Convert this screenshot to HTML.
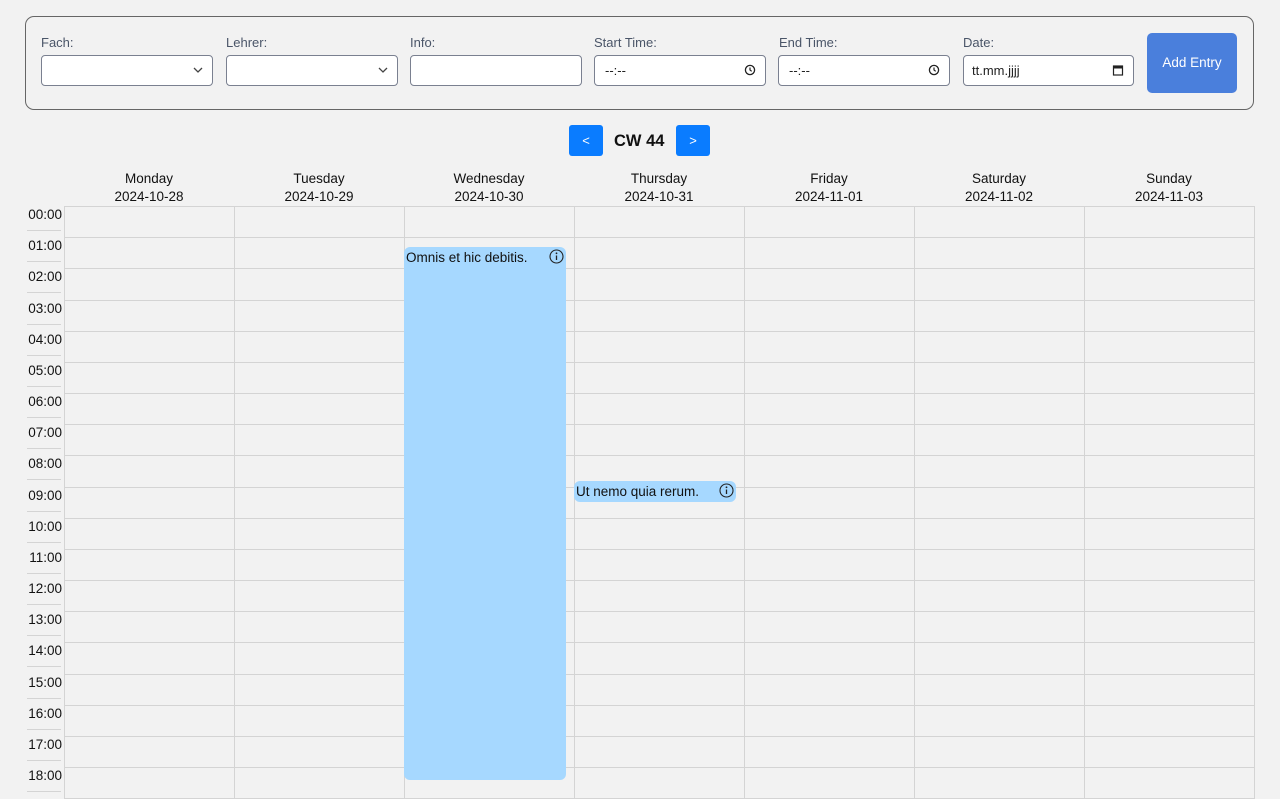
<!DOCTYPE html>
<html><head><style>
*{box-sizing:border-box;margin:0;padding:0}
body{width:1280px;height:799px;overflow:hidden;background:#f2f2f2;font-family:"Liberation Sans",sans-serif;color:#111;position:relative}
.form{position:absolute;left:25px;top:16px;width:1229px;height:94px;border:1px solid #666;border-radius:9px}
.lbl{position:absolute;top:35px;font-size:13px;color:#4a5568}
.inp{position:absolute;top:55px;height:31px;width:172px;background:#fff;border:1px solid #7a8090;border-radius:4px;font-size:13px;padding:0 10px;line-height:29px;color:#222}
.ic{position:absolute;right:9px;top:8px}
.btn{position:absolute;left:1147px;top:33px;width:90px;height:60px;background:#4a7fdc;border-radius:5px;color:#fff;font-size:13.5px;text-align:center;line-height:60px}
.nav{position:absolute;top:125px;width:34px;height:31px;background:#0a7cff;border-radius:3px;color:#fff;font-size:13px;text-align:center;line-height:31px}
.cw{position:absolute;left:614px;top:132px;font-size:16.5px;font-weight:bold}
.dh{position:absolute;top:170px;width:170px;text-align:center;font-size:13.5px;line-height:18px}
.vl{position:absolute;top:206px;bottom:0;width:1px;background:#d4d4d4}
.hl{position:absolute;left:64px;width:1190px;height:1px;background:#d4d4d4}
.tl{position:absolute;left:18px;width:44px;text-align:right;font-size:13.5px}
.ts{position:absolute;left:27px;width:34px;height:1px;background:#d4d4d4}
.ev{position:absolute;background:#a6d8ff;border-radius:6px;font-size:13.5px;padding-left:2px;color:#111}
.info{position:absolute;right:2px;top:2px}
</style></head><body>
<div class="form"></div>
<div class="lbl" style="left:41px">Fach:</div>
<div class="lbl" style="left:226px">Lehrer:</div>
<div class="lbl" style="left:410px">Info:</div>
<div class="lbl" style="left:594px">Start Time:</div>
<div class="lbl" style="left:779px">End Time:</div>
<div class="lbl" style="left:963px">Date:</div>
<div class="inp" style="left:41px"><svg class="ic" style="top:11px" width="10" height="7" viewBox="0 0 10 7"><path d="M1 1l4 4 4-4" stroke="#444" fill="none" stroke-width="1.3"/></svg></div>
<div class="inp" style="left:226px"><svg class="ic" style="top:11px" width="10" height="7" viewBox="0 0 10 7"><path d="M1 1l4 4 4-4" stroke="#444" fill="none" stroke-width="1.3"/></svg></div>
<div class="inp" style="left:410px"></div>
<div class="inp" style="left:594px">--:--<svg class="ic" width="12" height="12" viewBox="0 0 12 12"><circle cx="6" cy="6" r="4.6" stroke="#222" fill="none" stroke-width="1.3"/><path d="M6 3.5V6l1.7 1.3" stroke="#222" fill="none" stroke-width="1.2"/></svg></div>
<div class="inp" style="left:778px">--:--<svg class="ic" width="12" height="12" viewBox="0 0 12 12"><circle cx="6" cy="6" r="4.6" stroke="#222" fill="none" stroke-width="1.3"/><path d="M6 3.5V6l1.7 1.3" stroke="#222" fill="none" stroke-width="1.2"/></svg></div>
<div class="inp" style="left:963px;width:171px;padding-left:8px">tt.mm.jjjj<svg class="ic" width="12" height="12" viewBox="0 0 12 12"><rect x="1.5" y="2" width="9" height="9" stroke="#222" fill="none" stroke-width="1.2"/><rect x="1.5" y="2" width="9" height="2.5" fill="#222"/></svg></div>
<div class="btn">Add Entry</div>
<div class="nav" style="left:569px">&lt;</div>
<div class="cw">CW 44</div>
<div class="nav" style="left:676px">&gt;</div>
<div class="dh" style="left:64px">Monday<br>2024-10-28</div>
<div class="dh" style="left:234px">Tuesday<br>2024-10-29</div>
<div class="dh" style="left:404px">Wednesday<br>2024-10-30</div>
<div class="dh" style="left:574px">Thursday<br>2024-10-31</div>
<div class="dh" style="left:744px">Friday<br>2024-11-01</div>
<div class="dh" style="left:914px">Saturday<br>2024-11-02</div>
<div class="dh" style="left:1084px">Sunday<br>2024-11-03</div>
<div id="g"></div>
<div class="ev" style="left:404px;top:247px;width:162px;height:533px;line-height:22px">Omnis et hic debitis.<svg class="info" width="15" height="15" viewBox="0 0 15 15"><circle cx="7.5" cy="7.5" r="6.5" stroke="#222" fill="none" stroke-width="1.1"/><circle cx="7.5" cy="4.3" r="0.9" fill="#222"/><path d="M7.5 6.5v4.5" stroke="#222" stroke-width="1.3"/></svg></div>
<div class="ev" style="left:574px;top:481px;width:162px;height:21px;line-height:21px">Ut nemo quia rerum.<svg class="info" width="15" height="15" viewBox="0 0 15 15" style="right:2px;top:2px"><circle cx="7.5" cy="7.5" r="6.5" stroke="#222" fill="none" stroke-width="1.1"/><circle cx="7.5" cy="4.3" r="0.9" fill="#222"/><path d="M7.5 6.5v4.5" stroke="#222" stroke-width="1.3"/></svg></div>
<script>
var g=document.getElementById('g'),h='';
[64,234,404,574,744,914,1084,1254].forEach(function(x){h+='<div class="vl" style="left:'+x+'px"></div>'});
for(var i=0;i<20;i++){var y=206+i*31.17;h+='<div class="hl" style="top:'+Math.round(y)+'px"></div>';
if(i<19){h+='<div class="tl" style="top:'+Math.round(y+1)+'px">'+(i<10?'0':'')+i+':00</div><div class="ts" style="top:'+Math.round(y+24)+'px"></div>';}}
g.innerHTML=h;
</script>
</body></html>
